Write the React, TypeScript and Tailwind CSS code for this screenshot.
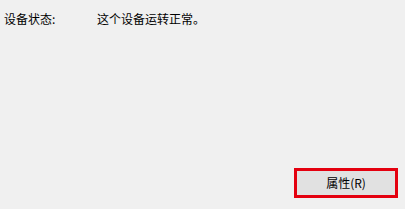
export default function App() {
  return (
    <div
      className="w-[405px] h-[209px] bg-[#f0f0f0] flex flex-col text-[12px] text-black"
      style={{ fontFamily: '"Microsoft YaHei", "Noto Sans CJK SC", sans-serif' }}
    >
      <div className="flex pt-[12px] pl-[4px] leading-[14px]">
        <div className="w-[93px]">设备状态:</div>
        <div>这个设备运转正常。</div>
      </div>
      <div className="flex-1" />
      <div className="flex justify-end pr-[7px] pb-[11px]">
        <button className="w-[104px] h-[30px] border-[3px] border-[#e4000f] bg-[#e1e1e1] flex items-center justify-center leading-none">
          属性(R)
        </button>
      </div>
    </div>
  );
}
